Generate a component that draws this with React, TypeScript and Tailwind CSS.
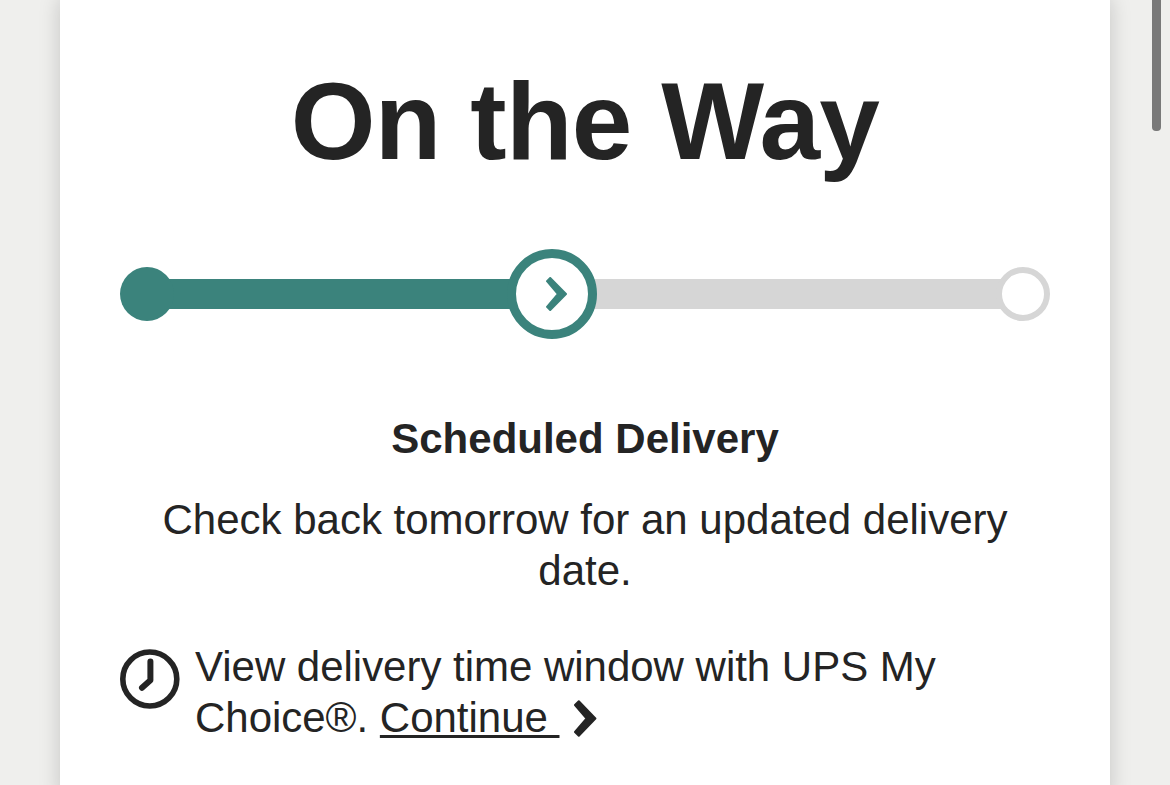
function ClockIcon() {
  return (
    <svg viewBox="0 0 60 60" className="h-[60px] w-[60px] shrink-0" fill="none" stroke="currentColor">
      <circle cx="29.8" cy="30" r="27" strokeWidth="5.6" />
      <path d="M30.4 12.5V31.2L22 38.7" strokeWidth="6" strokeLinecap="round" strokeLinejoin="round" />
    </svg>
  );
}

function StepChevron() {
  return (
    <svg viewBox="0 0 21 34" className="ml-[9px] h-[34px] w-[21px]" fill="currentColor" stroke="currentColor">
      <path d="M4.2 1L20 17L4.2 33L1 29.8L12 17L1 4.2Z" strokeWidth="2" strokeLinejoin="round" />
    </svg>
  );
}

function LinkChevron() {
  return (
    <svg viewBox="0 0 23 37" className="ml-[15px] inline-block h-[37px] w-[23px] align-[-5px]" fill="currentColor" stroke="currentColor">
      <path d="M4.8 1.2L21.4 18.5L4.8 35.8L1 32L12.6 18.5L1 5Z" strokeWidth="2" strokeLinejoin="round" />
    </svg>
  );
}

function ProgressTracker() {
  return (
    <div className="mt-[63px] flex h-[90px] items-center">
      <div className="z-10 h-[54px] w-[54px] shrink-0 rounded-full bg-[#3b837c]" />
      <div className="-mx-2.5 h-[30px] w-[353px] bg-[#3b837c]" />
      <div className="z-10 flex h-[90px] w-[90px] shrink-0 items-center justify-center rounded-full border-[9px] border-[#3b837c] bg-white text-[#3b837c]">
        <StepChevron />
      </div>
      <div className="-mx-2.5 h-[30px] flex-1 bg-[#d6d6d6]" />
      <div className="z-10 h-[54px] w-[54px] shrink-0 rounded-full border-[6px] border-[#d6d6d6] bg-white" />
    </div>
  );
}

export default function App() {
  return (
    <div className="relative flex h-[785px] w-[1170px] justify-center overflow-hidden bg-[#efefed] font-['Liberation_Sans',Arial,sans-serif] text-[#242424]">
      <main className="-my-2 w-[1050px] bg-white px-[60px] pt-[66px] shadow-[0_6px_20px_rgba(0,0,0,0.18)]">
        <h1 className="text-center text-[109px] leading-[126px] font-bold tracking-[-0.7px]">On the Way</h1>
        <div className="pt-0.5">
          <ProgressTracker />
        </div>

        <h2 className="mt-[74px] text-center text-[42px] leading-[51px] font-bold">Scheduled Delivery</h2>
        <p className="mt-[30px] text-center text-[42px] leading-[51px]">
          Check back tomorrow for an updated delivery date.
        </p>

        <div className="mt-[45px] flex gap-[15px]">
          <div className="pt-2">
            <ClockIcon />
          </div>
          <p className="text-[42px] leading-[51px] tracking-[-0.02px]">
            View delivery time window with UPS My
            <br />
            Choice®.{' '}
            <a href="#continue" className="underline decoration-[3px] underline-offset-[3px]">
              Continue&nbsp;
            </a>
            <LinkChevron />
          </p>
        </div>
      </main>

      {/* Scroll thumb */}
      <div className="absolute top-0 right-[9px] h-[131px] w-[9px] rounded-b-[4px] bg-[#797979]" />
    </div>
  );
}
